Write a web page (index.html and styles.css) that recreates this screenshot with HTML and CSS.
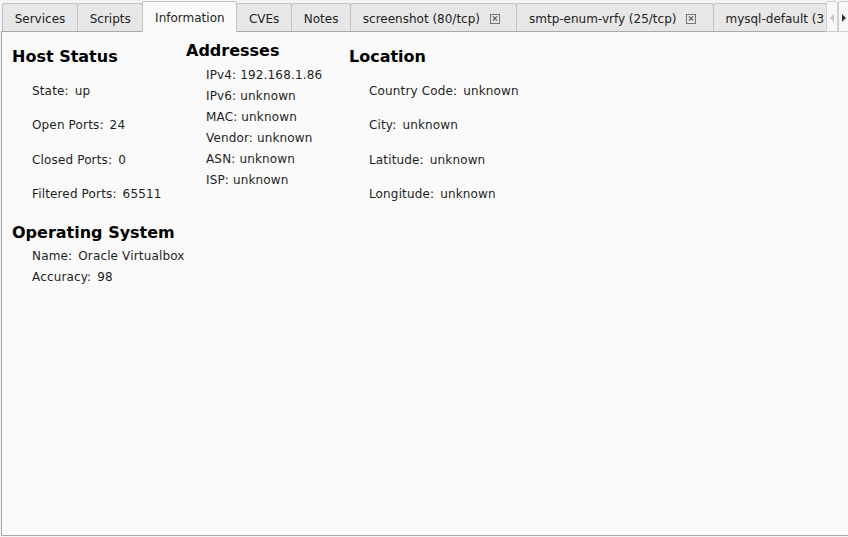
FILE: index.html
```html
<!DOCTYPE html>
<html lang="en">
<head>
    <meta charset="UTF-8">
    <title>Host Information</title>
    <link rel="stylesheet" href="styles.css">
</head>
<body>
    <div class="tabbar">
        <div class="tab">Services</div>
        <div class="tab">Scripts</div>
        <div class="tab active">Information</div>
        <div class="tab">CVEs</div>
        <div class="tab">Notes</div>
        <div class="tab closable">screenshot (80/tcp)<span class="close"></span></div>
        <div class="tab closable">smtp-enum-vrfy (25/tcp)<span class="close"></span></div>
        <div class="tab last">mysql-default (3</div>
        <div class="scroll">
            <span class="arrow left"></span>
            <span class="arrow right"></span>
        </div>
    </div>
    <div class="pane">
        <div class="col col-host">
            <h2>Host Status</h2>
            <ul class="wide">
                <li><span class="k">State:</span><span class="v">up</span></li>
                <li><span class="k">Open Ports:</span><span class="v">24</span></li>
                <li><span class="k">Closed Ports:</span><span class="v">0</span></li>
                <li><span class="k">Filtered Ports:</span><span class="v">65511</span></li>
            </ul>
            <h2 class="os">Operating System</h2>
            <ul class="tight">
                <li><span class="k">Name:</span><span class="v">Oracle Virtualbox</span></li>
                <li><span class="k">Accuracy:</span><span class="v">98</span></li>
            </ul>
        </div>
        <div class="col col-addr">
            <h2>Addresses</h2>
            <ul class="tight">
                <li>IPv4: 192.168.1.86</li>
                <li>IPv6: unknown</li>
                <li>MAC: unknown</li>
                <li>Vendor: unknown</li>
                <li>ASN: unknown</li>
                <li>ISP: unknown</li>
            </ul>
        </div>
        <div class="col col-loc">
            <h2>Location</h2>
            <ul class="wide">
                <li><span class="k">Country Code:</span><span class="v">unknown</span></li>
                <li><span class="k">City:</span><span class="v">unknown</span></li>
                <li><span class="k">Latitude:</span><span class="v">unknown</span></li>
                <li><span class="k">Longitude:</span><span class="v">unknown</span></li>
            </ul>
        </div>
    </div>
</body>
</html>
```

FILE: styles.css
```css
*{
    margin: 0;
    padding: 0;
    box-sizing: border-box;
}
html,body{
    width: 848px;
    height: 537px;
    overflow: hidden;
}
body{
    background: #f4f4f4;
    font: 12px "DejaVu Sans", sans-serif;
    color: #1e1e1e;
}
ul{
    list-style: none;
}

/* tabs */
.tabbar{
    display: flex;
    align-items: flex-end;
    height: 32px;
    padding-left: 2px;
    position: relative;
    z-index: 2;
    white-space: nowrap;
    overflow: hidden;
}
.tab{
    flex: none;
    display: flex;
    align-items: center;
    height: 28px;
    margin-bottom: 1px;
    padding: 2px 11.7px 0;
    margin-right: -1px;
    background: #e7e7e7;
    border: 1px solid #c2c2c2;
    border-bottom: none;
    border-radius: 3px 3px 0 0;
    color: #222;
}
.tab.active{
    height: 31px;
    margin-bottom: 0;
    padding-bottom: 1px;
    background: #fafafa;
    position: relative;
    z-index: 1;
}
.tab.closable{
    padding-right: 16.3px;
}
.close{
    display: inline-block;
    width: 10px;
    height: 10px;
    margin-left: 10px;
    border: 1px solid #777;
    position: relative;
}
.close:before,.close:after{
    content: "";
    position: absolute;
    left: 1px;
    top: 3px;
    width: 6px;
    height: 1px;
    background: #555;
    transform: rotate(45deg);
}
.close:after{
    transform: rotate(-45deg);
}
.tab.last{
    width: 114px;
    overflow: hidden;
}
.scroll{
    flex: none;
    display: flex;
    height: 31px;
}
.arrow{
    width: 12px;
    height: 31px;
    background: #f7f7f7;
    border: 1px solid #cfcfcf;
    border-radius: 3px 3px 0 0;
    position: relative;
}
.arrow:after{
    content: "";
    position: absolute;
    top: 12px;
    left: 3px;
    border: 4px solid transparent;
}
.arrow.left:after{
    border-right: 4px solid #c4c4c4;
    border-left: none;
}
.arrow.right{
    border-right: none;
}
.arrow.right:after{
    border-left: 4px solid #333;
    border-right: none;
}

/* pane */
.pane{
    display: grid;
    grid-template-columns: 174px 163px 1fr;
    align-items: start;
    height: 505px;
    width: 860px;
    margin-left: 1px;
    margin-top: -1px;
    padding: 9px 0 0 10px;
    background: #fafafa;
    border: 1px solid #a9a9a9;
    letter-spacing: 0.15px;
}
h2{
    font-size: 16px;
    font-weight: bold;
    line-height: 20px;
    color: #000;
    letter-spacing: 0;
}
.col-host,.col-loc{
    padding-top: 6px;
}
.wide{
    padding: 7px 0 0 20px;
}
.wide li{
    line-height: 34.4px;
    height: 34.4px;
}
.tight{
    padding: 3px 0 0 20px;
}
.tight li{
    line-height: 21px;
    height: 21px;
}
.col-addr .tight{
    padding-top: 4px;
}
.v{
    margin-left: 6px;
}
.os{
    margin-top: 11px;
}
```
